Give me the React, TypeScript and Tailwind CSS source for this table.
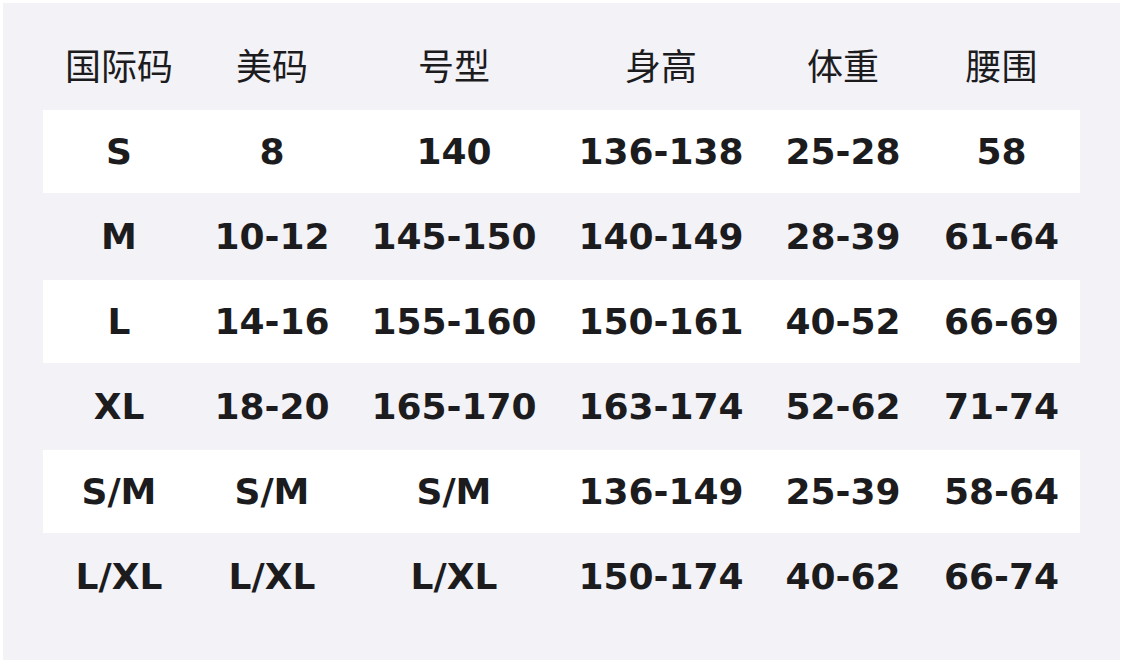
const headers = ["国际码", "美码", "号型", "身高", "体重", "腰围"];

const rows = [
  ["S", "8", "140", "136-138", "25-28", "58"],
  ["M", "10-12", "145-150", "140-149", "28-39", "61-64"],
  ["L", "14-16", "155-160", "150-161", "40-52", "66-69"],
  ["XL", "18-20", "165-170", "163-174", "52-62", "71-74"],
  ["S/M", "S/M", "S/M", "136-149", "25-39", "58-64"],
  ["L/XL", "L/XL", "L/XL", "150-174", "40-62", "66-74"],
];

const cols = "grid grid-cols-[152px_154px_210px_204px_160px_157px]";

export default function App() {
  return (
    <div className="w-[1123px] h-[663px] bg-white p-[3px]">
      <div className="h-full bg-[#f2f2f7] px-10 pt-[22px] text-[#1c1c1e]">
        <div className="flex flex-col gap-[2px]">
          <div className={`${cols} h-[83px] items-center pb-[6px]`}>
            {headers.map((h) => (
              <div
                key={h}
                className="text-center text-[36px] leading-none font-normal font-['Noto_Sans_CJK_SC',sans-serif]"
              >
                {h}
              </div>
            ))}
          </div>
          {rows.map((row, i) => (
            <div
              key={i}
              className={`${cols} h-[83px] items-center ${i % 2 === 0 ? "bg-white" : ""}`}
            >
              {row.map((cell, j) => (
                <div
                  key={j}
                  className="text-center text-[36px] leading-none font-bold font-['DejaVu_Sans',sans-serif]"
                >
                  {cell}
                </div>
              ))}
            </div>
          ))}
        </div>
      </div>
    </div>
  );
}
